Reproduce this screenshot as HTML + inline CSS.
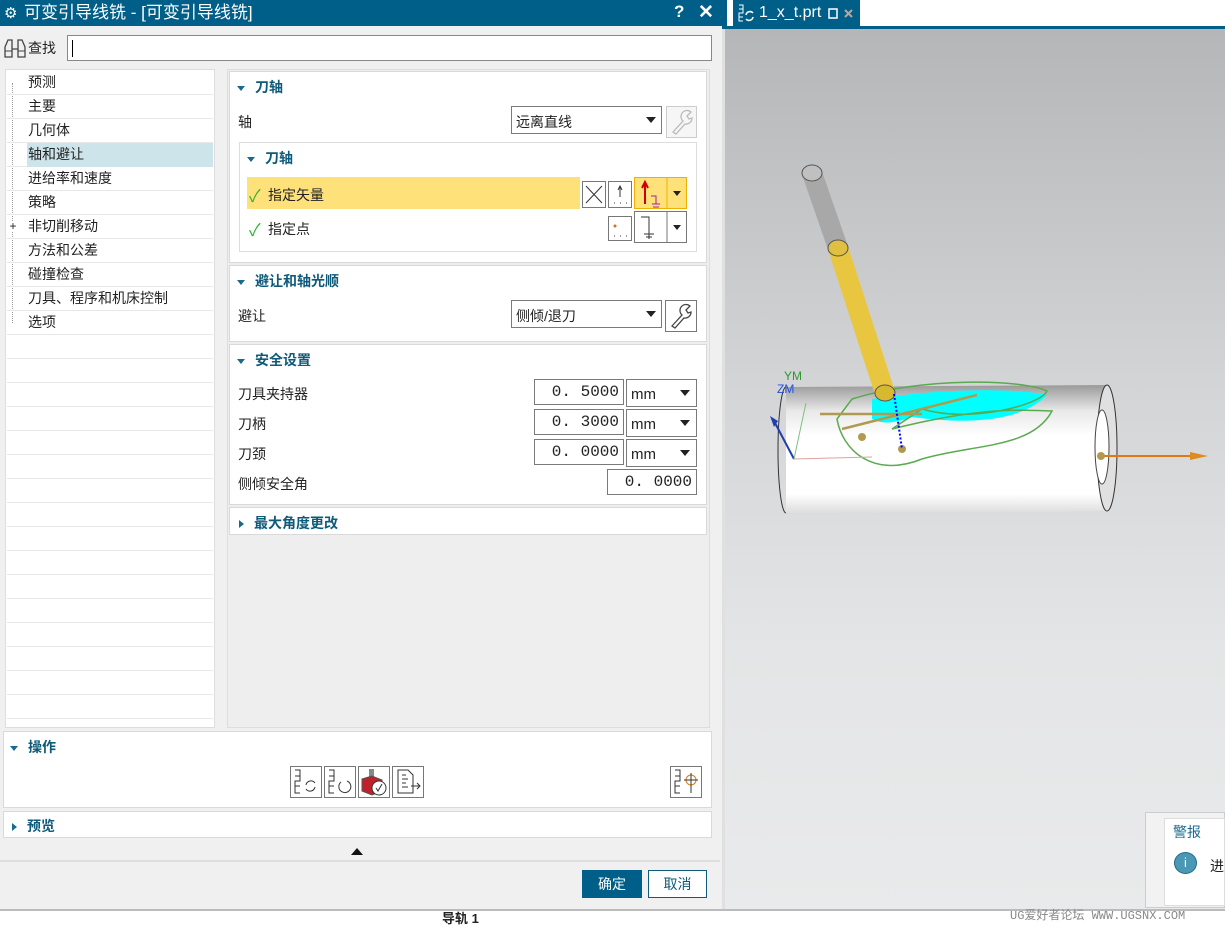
<!DOCTYPE html>
<html><head><meta charset="utf-8"><style>
*{box-sizing:border-box;margin:0;padding:0}
body{width:1225px;height:926px;overflow:hidden;position:relative;background:#f0f0f0;font-family:"Liberation Sans","Noto Sans CJK SC",sans-serif;font-size:14px;color:#222}
.a{position:absolute}
.sec{position:absolute;background:#fff;border:1px solid #d9d9d9}
.h{position:absolute;color:#0e5a7a;font-weight:bold;font-size:14px}
.tri{display:inline-block;width:0;height:0;border-left:4px solid transparent;border-right:4px solid transparent;border-top:5px solid #1a6a8a;margin-right:10px;vertical-align:middle}
.trr{display:inline-block;width:0;height:0;border-top:4px solid transparent;border-bottom:4px solid transparent;border-left:5px solid #1a6a8a;margin-right:10px;vertical-align:middle}
.box{position:absolute;background:#fff;border:1px solid #7a7a7a}
.dd{position:absolute;width:0;height:0;border-left:5px solid transparent;border-right:5px solid transparent;border-top:6px solid #222}
.row{position:absolute;left:7px;width:206px;height:24px;border-bottom:1px solid #e8e8e8;padding-left:21px;line-height:23px}
.num{font-family:"Liberation Mono",monospace;font-size:16px;text-align:right;padding-right:4px;line-height:24px}
.ib{position:absolute;width:32px;height:32px;background:#fff;border:1px solid #777}
</style></head><body>
<!-- title -->
<div class="a" style="left:0;top:0;width:722px;height:26px;background:#005f88;color:#fff;font-size:17px;line-height:26px;padding-left:24px">可变引导线铣 - [可变引导线铣]</div>
<div class="a" style="left:4px;top:4px;color:#fff;font-size:15px">⚙</div>
<div class="a" style="left:674px;top:2px;color:#fff;font-size:17px;font-weight:bold">?</div>
<div class="a" style="left:698px;top:1px;color:#fff;font-size:19px;font-weight:bold">✕</div>
<!-- search -->
<svg class="a" style="left:3px;top:37px" width="24" height="22"><path d="M2 20V10L5 3H9V20ZM15 20V3H19L22 10V20ZM9 12H15" stroke="#444" fill="none" stroke-width="1.3"/><path d="M2 14H9M15 14H22" stroke="#444"/></svg>
<div class="a" style="left:28px;top:38px;font-size:14px">查找</div>
<div class="box" style="left:67px;top:35px;width:645px;height:26px;border-color:#888"><div class="a" style="left:4px;top:4px;width:1px;height:17px;background:#000"></div></div>
<!-- tree -->
<div class="a" style="left:5px;top:69px;width:210px;height:659px;background:#fff;border:1px solid #ddd"></div>
<div class="a" style="left:12px;top:83px;width:1px;height:240px;border-left:1px dotted #999"></div>
<div class="row" style="top:71px">预测</div>
<div class="row" style="top:95px">主要</div>
<div class="row" style="top:119px">几何体</div>
<div class="row" style="top:143px"><div class="a" style="left:20px;top:0;width:186px;height:24px;background:#cde4ea"></div><span style="position:relative">轴和避让</span></div>
<div class="row" style="top:167px">进给率和速度</div>
<div class="row" style="top:191px">策略</div>
<div class="row" style="top:215px">非切削移动</div>
<div class="a" style="left:8px;top:221px;width:10px;height:10px;font-size:12px;line-height:10px;background:#fff;text-align:center">+</div>
<div class="row" style="top:239px">方法和公差</div>
<div class="row" style="top:263px">碰撞检查</div>
<div class="row" style="top:287px">刀具、程序和机床控制</div>
<div class="row" style="top:311px">选项</div>
<div class="row" style="top:335px"></div><div class="row" style="top:359px"></div><div class="row" style="top:383px"></div><div class="row" style="top:407px"></div><div class="row" style="top:431px"></div><div class="row" style="top:455px"></div><div class="row" style="top:479px"></div><div class="row" style="top:503px"></div><div class="row" style="top:527px"></div><div class="row" style="top:551px"></div><div class="row" style="top:575px"></div><div class="row" style="top:599px"></div><div class="row" style="top:623px"></div><div class="row" style="top:647px"></div><div class="row" style="top:671px"></div><div class="row" style="top:695px"></div>
<!-- middle panel -->
<div class="a" style="left:227px;top:69px;width:483px;height:659px;background:#eee;border:1px solid #ddd"></div>
<div class="sec" style="left:229px;top:71px;width:478px;height:192px"></div>
<div class="h" style="left:237px;top:77px"><span class="tri"></span>刀轴</div>
<div class="a" style="left:238px;top:112px">轴</div>
<div class="box" style="left:511px;top:106px;width:151px;height:28px;padding:5px 4px">远离直线</div><div class="dd" style="left:646px;top:117px"></div>
<div class="a" style="left:666px;top:106px;width:31px;height:32px;border:1px solid #ccc;background:#f6f6f6"><svg width="29" height="30"><path d="M6 25L16 14A6 6 0 0 1 24 5L20 9L22 12L25 11A6 6 0 0 1 18 17L9 27Z" fill="none" stroke="#bbb" stroke-width="1.3"/></svg></div>
<div class="a" style="left:239px;top:142px;width:458px;height:110px;border:1px solid #ddd"></div>
<div class="h" style="left:247px;top:148px"><span class="tri"></span>刀轴</div>
<div class="a" style="left:247px;top:177px;width:333px;height:32px;background:#ffe17a"></div>
<div class="a" style="left:249px;top:182px;color:#2bb52b;font-size:17px">✓</div>
<div class="a" style="left:268px;top:185px">指定矢量</div>
<div class="a" style="left:582px;top:181px;width:24px;height:27px;background:#fff;border:1px solid #777"><svg width="22" height="25"><path d="M3 4L19 21M19 4L3 21" stroke="#333" fill="none"/></svg></div>
<div class="a" style="left:608px;top:181px;width:24px;height:27px;background:#fff;border:1px solid #777"><svg width="22" height="25"><path d="M11 4V15" stroke="#333"/><path d="M9 8L11 4L13 8" stroke="#333" fill="none"/><path d="M5 21h1M11 21h1M17 21h1" stroke="#333"/></svg></div>
<div class="a" style="left:634px;top:177px;width:53px;height:32px;background:#ffe17a;border:1px solid #f0b000"><svg width="52" height="30"><path d="M10 26V6M7 10L10 4L13 10" stroke="#c00" stroke-width="2" fill="none"/><path d="M16 18H21V26M17 26H25M18 29H24" stroke="#a020a0" fill="none"/><path d="M32 0V30" stroke="#f0b000"/><path d="M38 13L46 13L42 18Z" fill="#222"/></svg></div>
<div class="a" style="left:249px;top:216px;color:#2bb52b;font-size:17px">✓</div>
<div class="a" style="left:268px;top:219px">指定点</div>
<div class="a" style="left:608px;top:216px;width:24px;height:25px;background:#fff;border:1px solid #777"><svg width="22" height="23"><circle cx="6" cy="9" r="1.5" fill="#d07020"/><path d="M5 19h1M11 19h1M17 19h1" stroke="#333"/></svg></div>
<div class="a" style="left:634px;top:211px;width:53px;height:32px;background:#fff;border:1px solid #777"><svg width="52" height="30"><path d="M6 5H14V27M9 22H19M11 25H17" stroke="#333" fill="none"/><path d="M32 0V30" stroke="#777"/><path d="M38 13L46 13L42 18Z" fill="#222"/></svg></div>
<div class="sec" style="left:229px;top:265px;width:478px;height:77px"></div>
<div class="h" style="left:237px;top:271px"><span class="tri"></span>避让和轴光顺</div>
<div class="a" style="left:238px;top:306px">避让</div>
<div class="box" style="left:511px;top:300px;width:151px;height:28px;padding:5px 4px">侧倾/退刀</div><div class="dd" style="left:646px;top:311px"></div>
<div class="a" style="left:665px;top:300px;width:32px;height:32px;border:1px solid #777;background:#fff"><svg width="30" height="30"><path d="M6 25L16 14A6 6 0 0 1 24 5L20 9L22 12L25 11A6 6 0 0 1 18 17L9 27Z" fill="none" stroke="#444" stroke-width="1.3"/></svg></div>
<div class="sec" style="left:229px;top:344px;width:478px;height:161px"></div>
<div class="h" style="left:237px;top:350px"><span class="tri"></span>安全设置</div>
<div class="a" style="left:238px;top:384px">刀具夹持器</div>
<div class="a" style="left:238px;top:414px">刀柄</div>
<div class="a" style="left:238px;top:444px">刀颈</div>
<div class="a" style="left:238px;top:474px">侧倾安全角</div>
<div class="box num" style="left:534px;top:379px;width:90px;height:26px">0. 5000</div>
<div class="box num" style="left:534px;top:409px;width:90px;height:26px">0. 3000</div>
<div class="box num" style="left:534px;top:439px;width:90px;height:26px">0. 0000</div>
<div class="box num" style="left:607px;top:469px;width:90px;height:26px">0. 0000</div>
<div class="box" style="left:626px;top:379px;width:71px;height:28px;padding:6px 4px;font-size:15px">mm</div><div class="dd" style="left:680px;top:390px"></div>
<div class="box" style="left:626px;top:409px;width:71px;height:28px;padding:6px 4px;font-size:15px">mm</div><div class="dd" style="left:680px;top:420px"></div>
<div class="box" style="left:626px;top:439px;width:71px;height:28px;padding:6px 4px;font-size:15px">mm</div><div class="dd" style="left:680px;top:450px"></div>
<div class="sec" style="left:229px;top:507px;width:478px;height:28px"></div>
<div class="h" style="left:239px;top:513px"><span class="trr"></span>最大角度更改</div>
<!-- bottom -->
<div class="sec" style="left:3px;top:731px;width:709px;height:77px"></div>
<div class="h" style="left:10px;top:737px"><span class="tri"></span>操作</div>
<div class="ib" style="left:290px;top:766px"><svg width="30" height="30"><path d="M4 3H9V9H4M9 9V14H4V19H9M4 19V26H9" stroke="#333" fill="none"/><path d="M15 18A5 5 0 0 1 24 16M24 20A5 5 0 0 1 15 22" stroke="#333" fill="none"/></svg></div>
<div class="ib" style="left:324px;top:766px"><svg width="30" height="30"><path d="M4 3H9V9H4M9 9V14H4V19H9M4 19V26H9" stroke="#333" fill="none"/><path d="M22 14A6 6 0 1 1 16 15" stroke="#333" fill="none"/></svg></div>
<div class="ib" style="left:358px;top:766px"><svg width="30" height="30"><rect x="10" y="2" width="5" height="10" fill="#888"/><path d="M3 12L13 9L23 13V24L13 28L3 24Z" fill="#c0202a" stroke="#555"/><circle cx="20" cy="21" r="7" fill="#fff" stroke="#333"/><path d="M17 21L19 24L23 17" stroke="#333" fill="none"/></svg></div>
<div class="ib" style="left:392px;top:766px"><svg width="30" height="30"><path d="M5 3H15L20 8V26H5Z M9 8H13M9 12H15M9 16H13M9 20H15M18 19H27M24 16L27 19L24 22" stroke="#333" fill="none"/></svg></div>
<div class="ib" style="left:670px;top:766px"><svg width="30" height="30"><path d="M4 3H9V9H4M9 9V14H4V19H9M4 19V26H9" stroke="#333" fill="none"/><circle cx="20" cy="13" r="5" stroke="#e07a10" fill="none"/><path d="M20 6V26M13 13H27" stroke="#333"/></svg></div>
<div class="sec" style="left:3px;top:811px;width:709px;height:27px"></div>
<div class="h" style="left:12px;top:816px"><span class="trr"></span>预览</div>
<div class="a" style="left:351px;top:848px;width:0;height:0;border-left:6px solid transparent;border-right:6px solid transparent;border-bottom:7px solid #111"></div>
<div class="a" style="left:0;top:860px;width:720px;height:2px;background:#ddd"></div>
<div class="a" style="left:582px;top:870px;width:60px;height:28px;background:#005f88;color:#fff;text-align:center;line-height:28px">确定</div>
<div class="a" style="left:648px;top:870px;width:59px;height:28px;background:#fff;border:1px solid #0e5a7a;color:#0e5a7a;text-align:center;line-height:26px">取消</div>
<div class="a" style="left:0;top:909px;width:1225px;height:17px;background:#fff;border-top:2px solid #bbb"></div>
<div class="a" style="left:442px;top:912px;font-size:13px;font-weight:bold;line-height:14px">导轨 1</div>
<!-- right viewport -->
<div class="a" style="left:722px;top:0;width:503px;height:28px;background:#fff"></div>
<div class="a" style="left:722px;top:0;width:5px;height:26px;background:#005f88"></div>
<div class="a" style="left:733px;top:0;width:127px;height:27px;background:#005f88"></div>
<svg class="a" style="left:737px;top:4px" width="20" height="18"><path d="M2 1H6V5H2M6 5V9H2V13H6M2 13V17H6" stroke="#fff" fill="none"/><path d="M9 11A4 4 0 0 1 16 9M16 13A4 4 0 0 1 9 15" stroke="#fff" fill="none" stroke-width="1.5"/></svg>
<div class="a" style="left:759px;top:4px;color:#fff;font-size:16px;white-space:nowrap">1_x_t.prt</div>
<svg class="a" style="left:828px;top:7px" width="28" height="14"><rect x="1" y="2" width="8" height="9" fill="none" stroke="#fff" stroke-width="1.5"/><path d="M17 3L24 10M24 3L17 10" stroke="#aaa" stroke-width="2"/></svg>
<div class="a" style="left:722px;top:26px;width:503px;height:3px;background:#005f88"></div>
<div class="a" style="left:722px;top:29px;width:503px;height:880px;background:linear-gradient(#b5b6b8,#d3d4d6 40%,#e4e5e6 70%,#e9eaeb);border-left:3px solid #e0e0e0"></div>
<svg class="a" style="left:722px;top:29px" width="503" height="880">
<defs><linearGradient id="cy" x1="0" y1="0" x2="0" y2="1"><stop offset="0" stop-color="#9a9a9a"/><stop offset=".2" stop-color="#e8e8e8"/><stop offset=".4" stop-color="#fff"/><stop offset=".85" stop-color="#fff"/><stop offset="1" stop-color="#ddd"/></linearGradient></defs>
<path d="M64 358L385 356L385 482L64 484Z" fill="url(#cy)"/>
<path d="M64 358A8 63 0 0 0 64 484" fill="none" stroke="#333"/>
<ellipse cx="385" cy="419" rx="10" ry="63" fill="#e0e0e0" stroke="#333"/>
<ellipse cx="380" cy="418" rx="7" ry="37" fill="#fff" stroke="#444"/>
<path d="M150 370C230 358 300 360 325 366C300 392 250 396 190 388C170 395 160 395 150 390Z" fill="#00ffff"/>
<path d="M130 370C200 348 300 350 325 362C320 375 250 395 200 380L170 400C250 380 290 380 330 382C310 420 250 415 200 430C150 450 120 420 115 390Z" fill="none" stroke="#5aaa50" stroke-width="1.5"/>
<path d="M72 430L52 392" stroke="#2040b0" stroke-width="2"/><path d="M48 387L56 392L52 398Z" fill="#2040b0"/>
<path d="M72 430L84 374" stroke="#80c080"/><path d="M72 430L150 428" stroke="#e0a0a0"/>
<text x="62" y="351" fill="#2a9a2a" font-size="12">YM</text>
<text x="55" y="364" fill="#2050e0" font-size="12">ZM</text>
<path d="M98 385L200 385M120 400L255 366" stroke="#b09a50" stroke-width="2.5" fill="none"/>
<circle cx="140" cy="408" r="4" fill="#b09a50"/><circle cx="180" cy="420" r="4" fill="#b09a50"/>
<path d="M380 427L468 427" stroke="#e07a10" stroke-width="2"/><path d="M468 423L486 427L468 431Z" fill="#e08a20"/><circle cx="379" cy="427" r="4" fill="#b09a50"/>
<path d="M90 144L116 219" stroke="#a8a8a8" stroke-width="20"/>
<ellipse cx="90" cy="144" rx="10" ry="8" fill="#c0c0c0" stroke="#555"/>
<path d="M116 219L163 364" stroke="#e8c640" stroke-width="20"/>
<ellipse cx="116" cy="219" rx="10" ry="8" fill="#e0c040" stroke="#555"/>
<ellipse cx="163" cy="364" rx="10" ry="8" fill="#d8b830" stroke="#555"/>
<path d="M172 365L180 420" stroke="#0000ff" stroke-width="2" stroke-dasharray="2 2"/>
</svg>
<div class="a" style="left:1145px;top:812px;width:80px;height:96px;background:#f2f2f2;border:1px solid #ccc"></div>
<div class="a" style="left:1164px;top:818px;width:61px;height:88px;background:#fff;border:1px solid #ddd"></div>
<div class="a" style="left:1173px;top:822px;color:#1a6a8a;font-size:14px">警报</div>
<div class="a" style="left:1174px;top:852px;width:23px;height:22px;border-radius:50%;background:#4a98b4;border:1px solid #206a8a;color:#fff;text-align:center;font-size:13px;line-height:20px">i</div>
<div class="a" style="left:1210px;top:856px;font-size:14px">进</div>
<div class="a" style="left:1010px;top:906px;color:#888;font-size:12px;font-family:'Liberation Mono','Noto Sans CJK SC',monospace">UG爱好者论坛 WWW.UGSNX.COM</div>
</body></html>
